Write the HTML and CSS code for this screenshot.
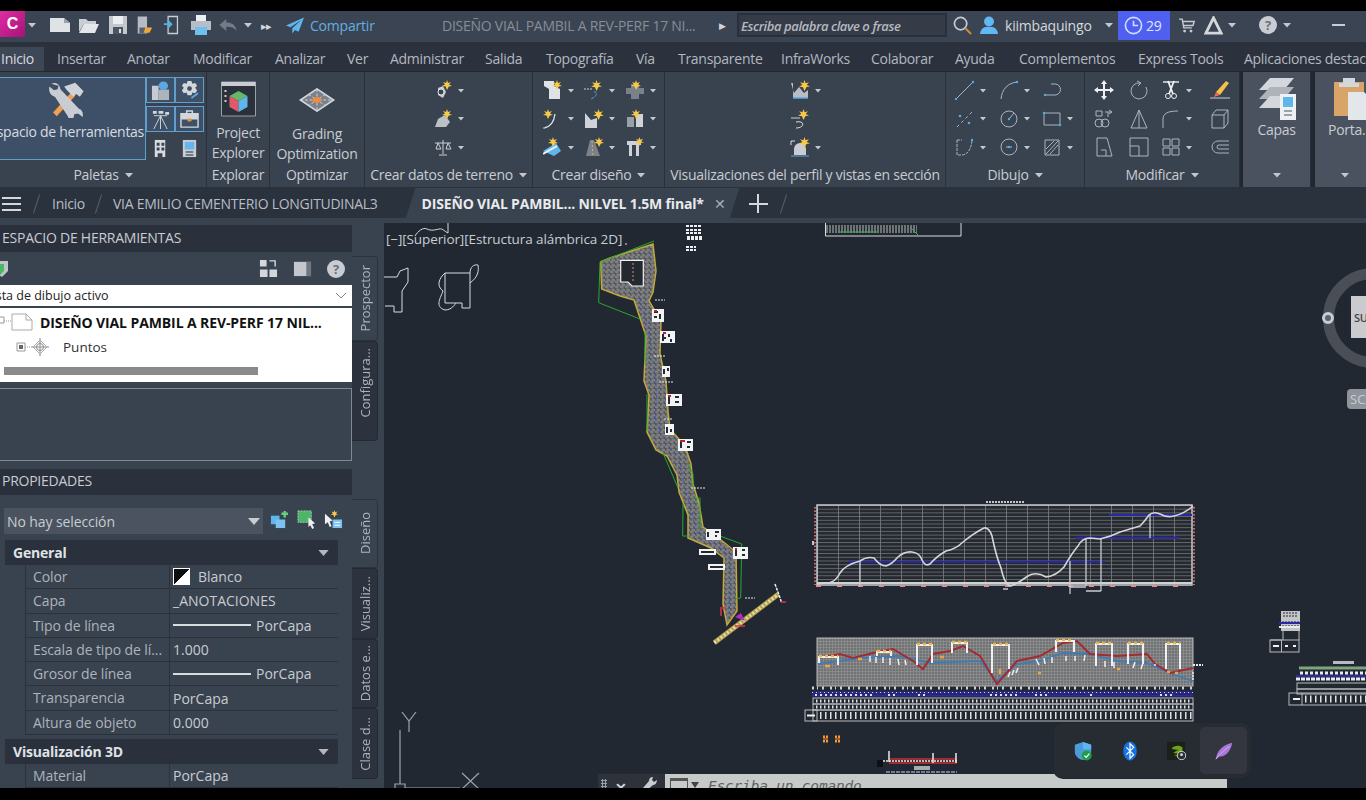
FILE: index.html
```html
<!DOCTYPE html>
<html lang="es">
<head>
<meta charset="utf-8">
<title>Civil 3D</title>
<link rel="stylesheet" href="styles.css">
</head>
<body>
<svg class="defs" aria-hidden="true">
  <symbol id="spark" viewBox="0 0 10 10"><path d="M5 0l1 3 3-1-2 2.600L10 6 6.800 6.400 5 10 3.600 6.500 0 6l3-1.500L1 2l3 1z" fill="#f7c948"/></symbol>
  <symbol id="caret" viewBox="0 0 8 6"><path d="M0 1h8L4 5.500z" fill="#c4c8ce"/></symbol>
</svg>
<div class="app">
  <header class="titlebar">
    <div class="logo">C</div>
    <svg class="caret tb-caret1"><use href="#caret"/></svg>
    <div class="qat">
      <svg class="q" viewBox="0 0 20 20"><path d="M0 3h14l6 5v9H0z" fill="#dfe3e8"/><path d="M14 3v5h6z" fill="#9aa1ab"/></svg>
      <svg class="q" viewBox="0 0 20 20"><path d="M0 4h7l2 2h8v3H5L0 17z" fill="#c9ced5"/><path d="M5 9h15l-4 9H0z" fill="#e3e6ea"/></svg>
      <svg class="q" viewBox="0 0 20 20"><path d="M1 1h18v18H1z" fill="#c3c8cf"/><path d="M5 1h10v8H5z" fill="#eceef1"/><path d="M5 12h10v7H5z" fill="#4d5562"/><path d="M11 14h2v4h-2z" fill="#dfe3e8"/></svg>
      <svg class="q q-sm" viewBox="0 0 20 20"><path d="M2 0h11v20H2z" fill="#b7bcc4"/><path d="M4 13h7v7H4z" fill="#59616e"/><path d="M11 13h8l-3 6H9z" fill="#f0a63a"/></svg>
      <svg class="q q-sm" viewBox="0 0 20 20"><path d="M6 0h11v20H6z" fill="none" stroke="#c9ced5" stroke-width="1.500"/><path d="M1 9h8M6 5l4 4-4 4" fill="none" stroke="#4fb3ea" stroke-width="2"/></svg>
      <svg class="q" viewBox="0 0 20 20"><path d="M5 0h10v6H5z" fill="#eceef1"/><path d="M0 6h20v9H0z" fill="#b9bec6"/><path d="M4 12h12v8H4z" fill="#6fc0ee"/></svg>
      <svg class="q q-undo" viewBox="0 0 20 14"><path d="M8 0v4c7 0 11 3 12 10-3-4-6-5-12-5v5L0 7z" fill="#737b87"/></svg>
      <svg class="caret"><use href="#caret"/></svg>
      <span class="ff">▸▸</span>
      <svg class="q q-send" viewBox="0 0 20 18"><path d="M20 0L0 9l5 2L17 3 7 12v6l3-4 4 2z" fill="#5fb6ee"/></svg>
      <span class="share">Compartir</span>
    </div>
    <div class="doc-title">DISEÑO VIAL PAMBIL A REV-PERF 17 NI...</div>
    <span class="tri">▶</span>
    <div class="search">Escriba palabra clave o frase</div>
    <svg class="mag" viewBox="0 0 20 20"><circle cx="8" cy="8" r="6.500" fill="none" stroke="#c6cbd2" stroke-width="1.800"/><path d="M13 13l6 6" stroke="#c98b3a" stroke-width="2.200"/></svg>
    <svg class="user" viewBox="0 0 20 20"><circle cx="10" cy="6" r="5.500" fill="#61b8f2"/><path d="M0 20c1-7 5-8 10-8s9 1 10 8z" fill="#61b8f2"/></svg>
    <span class="uname">kiimbaquingo</span>
    <svg class="caret tb-caret2"><use href="#caret"/></svg>
    <div class="trial"><svg class="clock" viewBox="0 0 20 20"><circle cx="10" cy="10" r="8.500" fill="none" stroke="#cfe0ff" stroke-width="1.700"/><path d="M10 5v5h5" fill="none" stroke="#cfe0ff" stroke-width="1.700"/></svg>29</div>
    <svg class="cart" viewBox="0 0 20 20"><path d="M0 2h4l2 11h10M4 5h15l-1.500 5H5" fill="none" stroke="#c6cbd2" stroke-width="1.800"/><circle cx="7" cy="17" r="1.800" fill="#c6cbd2"/><circle cx="15" cy="17" r="1.800" fill="#c6cbd2"/></svg>
    <svg class="apen" viewBox="0 0 20 20"><path d="M10 2L18 18H2z" fill="none" stroke="#d4d8dd" stroke-width="3"/></svg>
    <svg class="caret tb-caret3"><use href="#caret"/></svg>
    <div class="help">?</div>
    <svg class="caret tb-caret4"><use href="#caret"/></svg>
    <div class="minus"></div>
  </header>

  <nav class="tabs">
    <span class="tab active">Inicio</span><span class="tab">Insertar</span><span class="tab">Anotar</span><span class="tab">Modificar</span><span class="tab">Analizar</span><span class="tab">Ver</span><span class="tab">Administrar</span><span class="tab">Salida</span><span class="tab">Topografía</span><span class="tab">Vía</span><span class="tab">Transparente</span><span class="tab">InfraWorks</span><span class="tab">Colaborar</span><span class="tab">Ayuda</span><span class="tab">Complementos</span><span class="tab">Express Tools</span><span class="tab">Aplicaciones destacadas</span>
  </nav>

  <section class="ribbon">
    <div class="panel p-paletas">
      <div class="pbody paletas-body">
        <div class="bigbtn">
          <svg class="tools" viewBox="0 0 40 40">
            <path d="M6 34L26 12l4 4L10 38z" fill="#f0a050"/>
            <path d="M18 6l12-4 9 9-4 6-4-3-3 3-7-7z" fill="#cfd3d9"/>
            <path d="M4 3c5-2 9 0 10 6l20 21c3 1 5 4 4 9l-5-4-4 1-1 4 4 3c-5 1-9-1-10-5L8 17C3 16 1 11 2 6l5 4 4-1 1-4z" fill="#c9cdd3"/>
          </svg>
          <span class="bigbtn-label">Espacio de herramientas</span>
        </div>
        <div class="palgrid">
          <div class="palcell on"><svg viewBox="0 0 20 20"><path d="M1 5h7v15H1z" fill="#c6cbd2"/><path d="M8 9h11v11H8z" fill="#aeb4bc"/><ellipse cx="13" cy="5" rx="5" ry="4.500" fill="#5aa9e0"/></svg></div>
          <div class="palcell on"><svg viewBox="0 0 20 20"><path d="M8 0h4l1 3 3-1 2 3-2 2 2 3-2 3-3-1-1 3H8l-1-3-3 1-2-3 2-3-2-2 2-3 3 1z" fill="#d3d6db"/><circle cx="10" cy="8" r="2.500" fill="#3e5068"/><path d="M12 18l7-5" stroke="#5aa9e0" stroke-width="2"/></svg></div>
          <div class="palcell on"><svg viewBox="0 0 20 20"><path d="M2 1h4v3H2zM8 1h5v3H8zM15 2h4v3h-4z" fill="#d3d6db"/><path d="M3 6h14M10 6v14M10 6L3 20M10 6l7 14" stroke="#d3d6db" fill="none"/></svg></div>
          <div class="palcell on"><svg viewBox="0 0 20 20"><path d="M7 4V1h6v3M1 4h18v14H1z" fill="none" stroke="#d3d6db" stroke-width="1.500"/><path d="M1 4h18v6H1z" fill="#d3d6db"/><path d="M8 9h4v3H8z" fill="#e59a3f"/></svg></div>
          <div class="palcell"><svg viewBox="0 0 20 20"><path d="M4 1h11v18H4z" fill="#d8dbe0"/><path d="M6 4h3v3H6zM11 4h3v3h-3zM6 9h3v3H6zM11 9h3v3h-3zM7 15h5v4H7z" fill="#39424f"/></svg></div>
          <div class="palcell"><svg viewBox="0 0 20 20"><path d="M3 1h14v18H3z" fill="#c9cdd3"/><path d="M5 3h10v8H5z" fill="#66b6ec"/><path d="M6 13h8v1.500H6zM6 16h8v1.500H6z" fill="#59616e"/></svg></div>
        </div>
      </div>
      <div class="pfoot">Paletas <svg class="caret"><use href="#caret"/></svg></div>
    </div>

    <div class="panel p-explorer">
      <div class="pbody big">
        <svg class="bigicon" viewBox="0 0 36 36"><path d="M1 1h34v34H1z" fill="#2b313b" stroke="#9ba1a9"/><path d="M1 1h34v4H1z" fill="#c9cdd3"/><path d="M18 10l9 5-9 5-9-5z" fill="#63b86a"/><path d="M9 15l9 5v11l-9-5z" fill="#e0596a"/><path d="M27 15l-9 5v11l9-5z" fill="#5eb6ea"/><path d="M4 9h2v2H4zM4 14h2v2H4zM4 19h2v2H4z" fill="#c9cdd3"/></svg>
        <span class="biglabel">Project<br>Explorer</span>
      </div>
      <div class="pfoot">Explorar</div>
    </div>

    <div class="panel p-grading">
      <div class="pbody big">
        <svg class="bigicon wide" viewBox="0 0 38 26"><path d="M19 1l18 12-18 12L1 13z" fill="#7b818b" stroke="#d3d6db" stroke-width="1.800"/><path d="M10 7l18 12M28 7L10 19M19 1v24M1 13h36" stroke="#d3d6db" stroke-dasharray="3 2"/><path d="M19 9l6 4-6 4-6-4z" fill="#ee8b42"/></svg>
        <span class="biglabel">Grading<br>Optimization</span>
      </div>
      <div class="pfoot">Optimizar</div>
    </div>

    <div class="panel p-terreno">
      <div class="pbody col3">
        <div class="tool"><svg class="ic" viewBox="0 0 20 20"><path d="M5 8l5-2 3 6-3 6-5-3z" fill="#c9cdd3"/><circle cx="8" cy="12" r="3" fill="#39424f" stroke="#dfe3e8"/><use href="#spark" x="9" y="0" width="10" height="10"/></svg><svg class="caret"><use href="#caret"/></svg></div>
        <div class="tool"><svg class="ic" viewBox="0 0 20 20"><path d="M2 18l3-8 7-4 5 7-4 5z" fill="#bcc1c8"/><use href="#spark" x="9" y="0" width="10" height="10"/></svg><svg class="caret"><use href="#caret"/></svg></div>
        <div class="tool"><svg class="ic" viewBox="0 0 20 20"><path d="M10 3v14M6 18h8M2 6h16M5 6l-2 6h5zM15 6l-2 6h5z" fill="none" stroke="#c9cdd3"/></svg><svg class="caret"><use href="#caret"/></svg></div>
      </div>
      <div class="pfoot">Crear datos de terreno <svg class="caret"><use href="#caret"/></svg></div>
    </div>

    <div class="panel p-diseno">
      <div class="pbody tgrid g-diseno">
        <div class="tool"><svg class="ic" viewBox="0 0 20 20"><path d="M1 1h10v5l6 3v10H6V9L1 6z" fill="#dfe3e8"/><use href="#spark" x="9" y="0" width="10" height="10"/></svg><svg class="caret"><use href="#caret"/></svg></div>
        <div class="tool"><svg class="ic" viewBox="0 0 20 20"><path d="M0 9h8" stroke="#c9cdd3" stroke-dasharray="2 1"/><path d="M10 12c5 0 2 5-3 7" fill="none" stroke="#5aa9e0" stroke-dasharray="3 1"/><use href="#spark" x="7" y="0" width="11" height="11"/></svg><svg class="caret"><use href="#caret"/></svg></div>
        <div class="tool"><svg class="ic" viewBox="0 0 20 20"><path d="M6 4h8v4h5v6h-5v5H6v-5H1V8h5z" fill="#7b818b"/><use href="#spark" x="6" y="0" width="10" height="10"/></svg><svg class="caret"><use href="#caret"/></svg></div>
        <div class="tool"><svg class="ic" viewBox="0 0 20 20"><path d="M1 19c6-1 10-6 11-14" fill="none" stroke="#dfe3e8" stroke-width="1.300"/><circle cx="1" cy="19" r="1" fill="#5aa9e0"/><use href="#spark" x="0" y="0" width="10" height="10"/></svg><svg class="caret"><use href="#caret"/></svg></div>
        <div class="tool"><svg class="ic" viewBox="0 0 20 20"><path d="M1 4l6 7 6-2v10H1z" fill="#cfd3d9"/><use href="#spark" x="9" y="0" width="11" height="11"/></svg><svg class="caret"><use href="#caret"/></svg></div>
        <div class="tool"><svg class="ic" viewBox="0 0 20 20"><path d="M2 8h7v10H2z" fill="#9aa0a9"/><path d="M11 5h7v13h-7z" fill="#cfd3d9"/><use href="#spark" x="6" y="0" width="10" height="10"/></svg><svg class="caret"><use href="#caret"/></svg></div>
        <div class="tool"><svg class="ic" viewBox="0 0 20 20"><path d="M0 14L13 6l5 8-7 5z" fill="#5fb6ee"/><path d="M0 17l14-8" stroke="#eef0f2" stroke-width="2"/><use href="#spark" x="5" y="0" width="10" height="10"/></svg><svg class="caret"><use href="#caret"/></svg></div>
        <div class="tool"><svg class="ic" viewBox="0 0 20 20"><path d="M6 3h4l6 16H2z" fill="#7b818b"/><path d="M8 4l1 15" stroke="#eab14a" stroke-dasharray="2 2"/><use href="#spark" x="10" y="0" width="10" height="10"/></svg><svg class="caret"><use href="#caret"/></svg></div>
        <div class="tool"><svg class="ic" viewBox="0 0 20 20"><path d="M2 4h14v4h-2v11h-3V8H7v11H4V8H2z" fill="#cfd3d9"/><use href="#spark" x="10" y="0" width="9" height="9"/></svg><svg class="caret"><use href="#caret"/></svg></div>
      </div>
      <div class="pfoot">Crear diseño <svg class="caret"><use href="#caret"/></svg></div>
    </div>

    <div class="panel p-vis">
      <div class="pbody col3">
        <div class="tool"><svg class="ic" viewBox="0 0 20 20"><path d="M1 3h2v15h15v-8l-4 3-5-6-5 6z" fill="#b9bec6"/><path d="M3 18h15" stroke="#5aa9e0" stroke-width="1.500"/><use href="#spark" x="9" y="0" width="11" height="11"/></svg><svg class="caret"><use href="#caret"/></svg></div>
        <div class="tool"><svg class="ic" viewBox="0 0 20 20"><path d="M1 9h9" stroke="#c9cdd3"/><path d="M6 13c9-2 9 6 0 6" fill="none" stroke="#dfe3e8"/><use href="#spark" x="8" y="0" width="11" height="11"/></svg><span class="caret-gap"></span></div>
        <div class="tool"><svg class="ic" viewBox="0 0 20 20"><path d="M4 18v-6a6 6 0 0 1 12 0v6z" fill="#c9cdd3"/><path d="M1 4h4M1 4v4" stroke="#dfe3e8"/><path d="M1 19h18" stroke="#5aa9e0"/><use href="#spark" x="9" y="0" width="11" height="11"/></svg><svg class="caret"><use href="#caret"/></svg></div>
      </div>
      <div class="pfoot">Visualizaciones del perfil y vistas en sección</div>
    </div>

    <div class="panel p-dibujo">
      <div class="pbody tgrid g-dibujo">
        <div class="tool"><svg class="ic ln" viewBox="0 0 20 20"><path d="M1 19L18 2"/><circle cx="1" cy="19" r="1.200" class="dot"/><circle cx="18" cy="2" r="1.200" class="dot"/></svg><svg class="caret"><use href="#caret"/></svg></div>
        <div class="tool"><svg class="ic ln" viewBox="0 0 20 20"><path d="M2 19C3 9 9 3 18 2"/><circle cx="18" cy="2" r="1.200" class="dot"/></svg><svg class="caret"><use href="#caret"/></svg></div>
        <div class="tool"><svg class="ic ln" viewBox="0 0 20 20"><path d="M9 4h4a5 5 0 0 1 0 11H3"/><circle cx="3" cy="15" r="1.200" class="dot"/></svg><span class="caret-gap"></span></div>
        <div class="tool"><svg class="ic ln" viewBox="0 0 20 20"><path d="M2 18L18 2" stroke-dasharray="3 3"/><circle cx="5" cy="7" r="1.300" class="dot"/><circle cx="14" cy="14" r="1.300" class="dot"/></svg><svg class="caret"><use href="#caret"/></svg></div>
        <div class="tool"><svg class="ic ln" viewBox="0 0 20 20"><circle cx="10" cy="10" r="8"/><path d="M10 10l5-6"/><circle cx="10" cy="10" r="1.200" class="dot"/></svg><svg class="caret"><use href="#caret"/></svg></div>
        <div class="tool"><svg class="ic ln" viewBox="0 0 20 20"><path d="M2 4h16v12H2z"/><circle cx="2" cy="4" r="1.200" class="dot"/><circle cx="18" cy="16" r="1.200" class="dot"/></svg><svg class="caret"><use href="#caret"/></svg></div>
        <div class="tool"><svg class="ic ln" viewBox="0 0 20 20"><path d="M2 3h5M2 3v15h4c7 0 10-6 11-14" stroke-dasharray="3 1"/><circle cx="17" cy="3" r="1.200" class="dot"/></svg><svg class="caret"><use href="#caret"/></svg></div>
        <div class="tool"><svg class="ic ln" viewBox="0 0 20 20"><circle cx="10" cy="10" r="8"/><path d="M7 10h6"/><circle cx="10" cy="10" r="1.200" class="dot"/></svg><svg class="caret"><use href="#caret"/></svg></div>
        <div class="tool"><svg class="ic ln" viewBox="0 0 20 20"><path d="M3 3h14v15H3z"/><path d="M4 17L16 4M4 12l8-8M8 17l8-9" stroke="#8fa0b0"/></svg><svg class="caret"><use href="#caret"/></svg></div>
      </div>
      <div class="pfoot">Dibujo <svg class="caret"><use href="#caret"/></svg></div>
    </div>

    <div class="panel p-modif">
      <div class="pbody tgrid g-modif">
        <div class="tool"><svg class="ic" viewBox="0 0 20 20"><path d="M10 0l3 4h-2v5h5V7l4 3-4 3v-2h-5v5h2l-3 4-3-4h2v-5H4v2l-4-3 4-3v2h5V4H7z" fill="#eef0f2"/></svg></div>
        <div class="tool"><svg class="ic ln" viewBox="0 0 20 20"><path d="M11 3a8 8 0 1 0 6 4"/><path d="M8 1l4 2-3 3"/></svg></div>
        <div class="tool"><svg class="ic" viewBox="0 0 20 20"><path d="M2 2h16" stroke="#dfe3e8" stroke-width="1.500"/><path d="M7 1l5 13M13 1L8 14" stroke="#eef0f2" stroke-width="1.800"/><circle cx="7" cy="16" r="2.500" fill="none" stroke="#eef0f2"/><circle cx="13" cy="16" r="2.500" fill="none" stroke="#eef0f2"/></svg><svg class="caret"><use href="#caret"/></svg></div>
        <div class="tool"><svg class="ic" viewBox="0 0 20 20"><path d="M6 12L16 1l3 2-9 12z" fill="#f3c04c"/><path d="M6 12l4 3-6 2z" fill="#ea6a55"/><path d="M0 18h20" stroke="#c9cdd3"/></svg></div>
        <div class="tool"><svg class="ic ln" viewBox="0 0 20 20"><circle cx="5" cy="14" r="4"/><circle cx="11" cy="14" r="4"/><path d="M2 2h6v5H2zM11 3h7M15 1l3 2-3 2M14 3v5"/></svg></div>
        <div class="tool"><svg class="ic ln" viewBox="0 0 20 20"><path d="M10 1v18H2zM10 1l8 18h-8"/></svg></div>
        <div class="tool"><svg class="ic ln" viewBox="0 0 20 20"><path d="M2 19V10c0-5 4-8 15-8"/></svg><svg class="caret"><use href="#caret"/></svg></div>
        <div class="tool"><svg class="ic ln" viewBox="0 0 20 20"><path d="M2 6h12v13H2zM2 6l4-5h12l-4 5M14 19l4-5V1"/></svg></div>
        <div class="tool"><svg class="ic ln" viewBox="0 0 20 20"><path d="M3 1h10l5 18H3zM7 13h5v6"/></svg></div>
        <div class="tool"><svg class="ic ln" viewBox="0 0 20 20"><path d="M1 1h18v18H1zM10 9H1M10 9v10"/></svg></div>
        <div class="tool"><svg class="ic ln" viewBox="0 0 20 20"><path d="M2 2h7v7H2zM11 2h7v7h-7zM2 11h7v7H2zM11 11h7v7h-7z"/></svg><svg class="caret"><use href="#caret"/></svg></div>
        <div class="tool"><svg class="ic ln" viewBox="0 0 20 20"><path d="M19 4H8a6 6 0 0 0 0 12h11M19 8H9a2 2 0 0 0 0 4h10"/></svg></div>
      </div>
      <div class="pfoot">Modificar <svg class="caret"><use href="#caret"/></svg></div>
    </div>

    <div class="panel p-capas pale">
      <div class="pbody big">
        <svg class="bigicon capas-ic" viewBox="0 0 38 42"><path d="M12 0h24L26 12H1z" fill="#d3d6db"/><path d="M12 9h24L26 21H1z" fill="#aeb3ba"/><path d="M12 18h24L26 30H1z" fill="#d3d6db"/><path d="M22 16h16v26H22z" fill="#eef0f2"/><path d="M25 19h10v10H25z" fill="#5eb6ea"/><path d="M26 33h8M26 37h8" stroke="#4d5562"/></svg>
        <span class="biglabel capas-l">Capas</span>
      </div>
      <div class="pfoot"><svg class="caret"><use href="#caret"/></svg></div>
    </div>

    <div class="panel p-porta pale">
      <div class="pbody big">
        <svg class="bigicon porta-ic" viewBox="0 0 38 42"><path d="M0 4h30v34H0z" fill="#d8a468"/><path d="M9 0h12v5h4v4H5V5h4z" fill="#d3d6db"/><path d="M14 14h16l8 8v20H14z" fill="#e3e6ea"/></svg>
        <span class="biglabel porta-l">Porta...</span>
      </div>
      <div class="pfoot"><svg class="caret"><use href="#caret"/></svg></div>
    </div>
  </section>

  <nav class="docbar">
    <div class="burger"><i></i><i></i><i></i></div>
    <span class="slash"></span>
    <span class="dtab">Inicio</span>
    <span class="slash"></span>
    <span class="dtab">VIA EMILIO CEMENTERIO LONGITUDINAL3</span>
    <div class="dtab-active"><b>DISEÑO VIAL PAMBIL... NILVEL 1.5M final*</b><span class="dclose">✕</span></div>
    <span class="plus"></span>
    <span class="slash"></span>
  </nav>

  <main class="workspace">
    <aside class="side">
      <div class="side-main">
        <div class="phead">ESPACIO DE HERRAMIENTAS</div>
        <div class="ts-bar">
          <svg class="ts-shield" viewBox="0 0 12 16"><path d="M0 0h12v10l-6 6-6-4z" fill="#bfc4ca"/><path d="M0 3h8v7l-4 4-4-3z" fill="#4ab865"/></svg>
          <div class="ts-tools">
            <svg viewBox="0 0 20 20"><path d="M1 1h7v7H1zM11 11h8v8h-8zM1 11h8v8H1z" fill="#d3d6db"/><path d="M11 2h6v6" fill="none" stroke="#d3d6db" stroke-width="1.500"/></svg>
            <svg viewBox="0 0 20 20"><path d="M1 3h18v15H1z" fill="#c3c7cd"/><path d="M14 3h5v15h-5z" fill="#6f7680"/></svg>
            <div class="ts-help">?</div>
          </div>
        </div>
        <div class="ts-select"><span>Lista de dibujo activo</span><svg viewBox="0 0 10 6"><path d="M0 0l5 5 5-5" fill="none" stroke="#888"/></svg></div>
        <div class="tree">
          <div class="tree-inner">
            <div class="tree-row root">
              <svg class="tree-doc" viewBox="0 0 34 18"><path d="M0 4h5v6H0z" fill="#fff" stroke="#999"/><path d="M5 8h8" stroke="#999" stroke-dasharray="1 1"/><path d="M13 1h14l6 6v10H13z" fill="#fff" stroke="#aaa"/><path d="M27 1v6h6" fill="none" stroke="#aaa"/></svg>
              <b>DISEÑO VIAL PAMBIL A REV-PERF 17 NIL...</b>
            </div>
            <div class="tree-row sub">
              <svg class="tree-pt" viewBox="0 0 34 20"><path d="M1 6h8v8H1z" fill="#fff" stroke="#999"/><path d="M3 8h4v4H3z" fill="#666"/><path d="M9 10h5" stroke="#999" stroke-dasharray="1 1"/><path d="M24 1v18M15 10h18" stroke="#8a8a8a"/><circle cx="24" cy="10" r="3.500" fill="none" stroke="#8a8a8a"/><path d="M24 3l7 7-7 7-7-7z" fill="none" stroke="#aaa"/></svg>
              <span>Puntos</span>
            </div>
          </div>
          <div class="hscroll"></div>
        </div>
        <div class="ts-preview"></div>
        <div class="phead prop-head">PROPIEDADES</div>
        <div class="prop-top">
          <div class="combo">No hay selección<svg viewBox="0 0 12 7"><path d="M0 0h12L6 7z" fill="#c9cdd3"/></svg></div>
          <div class="prop-tools">
            <svg viewBox="0 0 20 20"><path d="M1 6h9v9H1z" fill="#5eb6ea"/><path d="M6 10h10v9H6z" fill="#7cc4ee"/><path d="M12 4h7M15.500 1v7" stroke="#63d27a" stroke-width="2.500"/></svg>
            <svg viewBox="0 0 20 20"><path d="M1 1h14v12H1z" fill="#4eb36b" stroke="#8fd6a4" stroke-dasharray="2 1"/><path d="M12 8l7 6-3 1 2 4-2 1-2-4-2 2z" fill="#eef0f2"/></svg>
            <svg viewBox="0 0 20 20"><path d="M1 4l8 7-3 1 2 5-2 1-2-5-3 2z" fill="#eef0f2"/><path d="M9 10h10v9H9z" fill="#7cc4ee"/><path d="M11 13h6M11 16h6" stroke="#fff"/><use href="#spark" x="7" y="0" width="8" height="8"/></svg>
          </div>
        </div>
        <div class="group">
          <div class="ghead">General<svg viewBox="0 0 12 7"><path d="M0 0h12L6 7z" fill="#b3b8bf"/></svg></div>
          <div class="prow"><span class="pname">Color</span><span class="pval"><i class="swatch"></i>Blanco</span></div>
          <div class="prow"><span class="pname">Capa</span><span class="pval">_ANOTACIONES</span></div>
          <div class="prow"><span class="pname">Tipo de línea</span><span class="pval"><i class="lineeg"></i>PorCapa</span></div>
          <div class="prow"><span class="pname">Escala de tipo de lí...</span><span class="pval">1.000</span></div>
          <div class="prow"><span class="pname">Grosor de línea</span><span class="pval"><i class="lineeg"></i>PorCapa</span></div>
          <div class="prow"><span class="pname">Transparencia</span><span class="pval">PorCapa</span></div>
          <div class="prow"><span class="pname">Altura de objeto</span><span class="pval">0.000</span></div>
        </div>
        <div class="group g2">
          <div class="ghead">Visualización 3D<svg viewBox="0 0 12 7"><path d="M0 0h12L6 7z" fill="#b3b8bf"/></svg></div>
          <div class="prow"><span class="pname">Material</span><span class="pval">PorCapa</span></div>
        </div>
      </div>
      <div class="vtabs">
        <div class="vt-top">
          <div class="vtab on h-pros"><span>Prospector</span></div>
          <div class="vtab h-conf"><span>Configura...</span></div>
        </div>
        <div class="vt-bot">
          <div class="vtab on h-dis"><span>Diseño</span></div>
          <div class="vtab h-vis"><span>Visualiz...</span></div>
          <div class="vtab h-dat"><span>Datos e...</span></div>
          <div class="vtab h-cla"><span>Clase d...</span></div>
        </div>
      </div>
    </aside>

    <div class="canvas">
      <svg class="drawing" viewBox="384 222 982 566" preserveAspectRatio="xMinYMin">
        <defs>
          <pattern id="gridChart" x="817" y="504" width="375" height="3.700" patternUnits="userSpaceOnUse"><path d="M0 .5H375" stroke="#73767b" stroke-width=".8"/></pattern>
          <pattern id="gridChartV" x="817" y="504" width="21" height="80" patternUnits="userSpaceOnUse"><path d="M.5 0V80" stroke="#7b7f85" stroke-width=".8"/></pattern>
          <pattern id="gridSec" x="817" y="637" width="3" height="3" patternUnits="userSpaceOnUse"><rect width="3" height="3" fill="#717274"/><path d="M0 .5H3M.5 0V3" stroke="#8f9092" stroke-width=".7"/></pattern>
          <pattern id="rough" width="5" height="5" patternUnits="userSpaceOnUse"><rect width="5" height="5" fill="#68696c"/><path d="M0 1h3M2 4h3" stroke="#96979a" stroke-width=".9"/><path d="M4 2h1M0 3h1" stroke="#38393d" stroke-width=".9"/></pattern>
        </defs>

        <text x="386" y="243" class="vp-label">[−][Superior][Estructura alámbrica 2D]</text>

        <g class="wire">
          <path d="M384 276h13l3-6 8-3v14l-6 9v21h-8v-6h-9"/>
          <path d="M445 272h25v35h-8v-5h-17zM445 272C439 277 436 285 443 290C441 296 434 306 445 309C452 309 455 303 456 302M470 272C470 266 474 263 478 264C479 270 478 276 470 282"/>
          <path d="M415 235c3-5 8-9 12-7s8 1 12 0 6 3 9 4v-10"/>
        </g>

        <g class="site">
          <path class="road" d="M600.700 260.700L610 257L653 243L656 270L653 291L649 300L661 320L660 353L666 380L668 410L670 428L685 445L691 463L693 483L699 502L703 526L716 535L736 551L737 610L727 624L723 603L724 557L711 547L688 537L688 514L679 491L677 474L667 455L656 449L647 431L649 394L644 380L646 335L639 314L634 299L620 295L601.700 288Z"/>
          <path class="green" d="M654 240L600 261L598.700 301.700L640 318M645 330V362.700M647 393V430M663 452L678 487M688 463L693 473V487M683 503L682.700 535H690M693 497H700V528M720 535L741.700 543L740.700 597L735 598"/>
          <path class="center" d="M640 298L648 325L653 360L657 390L655 420L665 440L680 460L684 485L692 510L695 530L715 542L730 556L731 590L728 610"/>
          <path class="inner" d="M620.700 259.300H643.300V285H632L628 281H620.700Z"/>
          <path class="inner2" d="M633 262V282" />
          <g class="labels">
            <rect x="652" y="308" width="12" height="13"/><rect x="660" y="330" width="15" height="12"/><rect x="662" y="365" width="8" height="11"/><rect x="666" y="393" width="16" height="12"/><rect x="665" y="423" width="9" height="11"/><rect x="678" y="438" width="15" height="12"/><rect x="706" y="528" width="15" height="11"/><rect x="733" y="546" width="15" height="12"/><rect x="699" y="548" width="17" height="6"/><rect x="708" y="563" width="17" height="6"/>
          </g>
          <g class="labelmarks">
            <path d="M654 311h4M654 316h3M660 313v5M663 333v7M669 333v3M663 337h3M671 338v3M664 368v5M668 367v3M669 396v7M675 396h4M675 401h4M667 426v6M671 428v3M681 441v6M687 441h4M687 446h3M708 531v5M715 531h4M715 535h2M736 549v6M742 549h3M742 554h3M701 551h13M710 566h13"/>
          </g>
          <path class="redlbl" d="M654 310h3M663 332h3M668 395h3M680 440h5M735 548h2"/>
          <path class="dim" d="M655 299h10M654 355h12M659 381h14M664 418h8M691 487h14M745 597h10M625 243h2"/>
          <path d="M714.300 641.700L778.300 593.300" class="diag"/>
          <path d="M714.300 641.700L778.300 593.300" class="diag2"/>
          <path d="M775 583L781.700 601.700" class="crossw"/>
          <path d="M721 608v7M781 601h5M735 625h10M720 607h6" class="redm"/>
          <path d="M735 616l10 4-4-8" class="magenta"/>
        </g>

        <g class="topstuff">
          <path d="M686 225h16M686 229h16M686 232h16M687 236h16M687 238h16M686 246h10M686 249h10" class="wblock"/>
          <path d="M825.500 222v13H961V222" class="wire-thin"/>
          <path d="M826 228H917" stroke="#6f7376" stroke-width="8" stroke-dasharray="2 1"/>
          <path d="M910 226l8 8M838 231h40" stroke="#3db05d" stroke-width="1"/>
        </g>

        <g class="chart">
          <rect x="817" y="504" width="375" height="80" fill="#24292f"/>
          <rect x="817" y="504" width="375" height="80" fill="url(#gridChart)"/>
          <rect x="817" y="504" width="375" height="80" fill="url(#gridChartV)"/>
          <rect x="817" y="504" width="375" height="80" class="cbox"/>
          <path d="M817 582H1192" stroke="#cfd1d3" stroke-width="2"/>
          <path d="M815 506V584M1194 506V584" stroke="#c76a6a" stroke-width="2" stroke-dasharray="1.500 2"/>
          <path d="M816 585H1194" stroke="#e08f8f" stroke-width="2" stroke-dasharray="5 16"/>
          <path d="M848 560.700H1105M1075 536.700H1180M1109 514H1192" stroke="#2a29a5" stroke-width="2"/>
          <path d="M860 560V585M1086 537V585M1150 513V537" class="cv"/>
          <path d="M1070 560V593M1070 586H1086M1086 590H1101M1101 537V590" class="cv"/>
          <path class="curve" d="M817 583L830 581.500Q836 580 840 572Q845 564 860 560Q867 555 874 557Q880 565 886 565Q892 563 897 557Q904 550 912 551Q920 552 922 559Q925 566 930 563Q937 555 946 550Q956 548 963 541Q974 532 984 527Q989 526 992 535Q996 555 1001 567Q1005 585 1011 585Q1020 581 1028 575Q1036 570 1046 576Q1056 575 1064 566Q1072 552 1078 545Q1082 537 1090 537L1100 538Q1110 536 1120 531L1140 525Q1145 520 1149 514Q1153 510 1160 513Q1167 517 1174 515Q1184 513 1193 505"/>
          <path d="M986 501H1024" stroke="#c4c6c8" stroke-width="2" stroke-dasharray="2 1"/>
          <path d="M1003 588h5" stroke="#c4c6c8" stroke-width="1.500"/>
          <path d="M813 540v4" stroke="#c4c6c8" stroke-width="2"/>
        </g>

        <g class="section">
          <rect x="817" y="637" width="376" height="48" fill="url(#gridSec)" stroke="#b5b6b8"/>
          <polyline class="sblue" points="818,663 860,657 900,655 930,662 980,660 997,680 1017,663 1040,660 1063,652 1090,653 1117,660 1147,662 1170,672 1193,680"/>
          <polyline class="sred" points="818,657 840,653 853,657 873,652 893,648 913,660 923,668 933,653 950,650 963,645 980,655 997,683 1017,660 1040,655 1063,642 1077,640 1090,653 1117,655 1147,653 1155,663 1170,672 1193,667"/>
          <path class="arch" d="M917 664V644H932V662M952 652V642H967V652M992 672V644H1009V668M1056 651V640H1074V651M1096 665V643H1112V665M1128 663V643H1143V663M1166 668V643H1180V668M819 662V656H838V664M877 655V651H891V655"/>
          <path d="M917 643H932M952 641H967M993 643H1009M1056 639H1074M1096 642H1112M1128 642H1143M1167 642H1180M819 655H838M877 650H891" stroke="#f0b53f" stroke-width="2.500" stroke-dasharray="3 3"/>
          <path class="ticks" d="M870 655v6M876 656v6M883 656v6M890 657v7M898 658l1 6M905 659l1 5M1010 671l-2 5M1014 669l-2 5M1018 667l-2 5M1036 658l3 6M1044 657l1 6M1052 656v6M1066 655v5M1075 655v5M1085 654l-1 6M1105 660v6M1114 661v6M1135 661l-2 6M1143 662l-2 6M1155 663v2"/>
          <path d="M825 665h5M858 658h4M940 656h4M1000 668v5M1038 672h3M1117 668h3M1167 671h3M1175 672h3" stroke="#e6a64a" stroke-width="2.500"/>
          <path d="M1193 664h10" stroke="#e8eaec" stroke-width="2" stroke-dasharray="2 1"/>
          <path d="M1193 671v9" stroke="#e8eaec" stroke-width="1.500" stroke-dasharray="2 1"/>
          <path d="M812 687H1193" stroke="#cfd1d3" stroke-width="3" stroke-dasharray="2 3 1 4 2 6"/>
          <path d="M812 691.500H1193M812 694.500H1193" stroke="#2a29a5" stroke-width="2"/>
          <path d="M812 691.500H1193" stroke="#d0d2ff" stroke-width="1" stroke-dasharray="1 3"/>
          <path d="M815 694h60M888 694h10M918 694h10M990 694h30M1035 694h15M1090 694h4M1160 694h12" stroke="#dfe1e3" stroke-width="2" stroke-dasharray="2 3"/>
          <rect x="813" y="697" width="380" height="6" class="tbox"/>
          <rect x="813" y="703" width="380" height="6" class="tbox"/>
          <rect x="813" y="709" width="380" height="11" class="tbox"/>
          <rect x="805" y="709" width="12" height="11" class="tbox"/>
          <path d="M807 714.500h8" stroke="#eef0f2" stroke-width="2"/>
          <path d="M816 700H1192" class="tdash"/>
          <path d="M816 706H1192" class="tdash"/>
          <path d="M820 714.500H1192" class="tdash big"/>
        </g>

        <g class="misc">
          <path d="M823 736h6M823 740h6M835 736h6M835 740h6" stroke="#e8a030" stroke-width="3" stroke-dasharray="2 1"/>
          <path d="M825 738h3M837 738h3" stroke="#d43c2c" stroke-width="2"/>
          <rect x="877" y="759" width="6" height="7" fill="#0d1014"/>
          <path d="M889 758H957M889 762H957" stroke="#a32a30" stroke-width="2"/>
          <path d="M883 760H957" stroke="#e8eaec" stroke-width="1.500" stroke-dasharray="2 1"/>
          <path d="M889 750v11M933 752v10M956 752v10" stroke="#e8eaec" stroke-width="1.500"/>
          <path d="M886 771H957" stroke="#6c7f96" stroke-width="2" stroke-dasharray="4 1"/>
          <rect x="914" y="765" width="16" height="4" fill="#a8abae"/>
        </g>

        <g class="blockA">
          <path d="M1281 610h19v20h-19z" fill="#dfe1e3" opacity=".85"/>
          <path d="M1283 612h15M1283 615h15M1282 621h17M1282 625h17" stroke="#24292f" stroke-width="1.200" stroke-dasharray="2 1"/>
          <path d="M1279 622h21" stroke="#2a29a5" stroke-width="2"/>
          <path d="M1279 626h21" stroke="#e8eaec" stroke-width="2"/>
          <rect x="1270" y="639" width="29" height="12" class="tbox"/>
          <path d="M1270.500 639h11v12M1283 630v9M1299 630v9" class="tline"/>
          <path d="M1273 645h6M1285 645h3M1293 645h3" stroke="#eef0f2" stroke-width="2"/>
        </g>
        <g class="blockB">
          <rect x="1333" y="660" width="21" height="3" fill="#b8babc"/>
          <path d="M1299 667H1366" stroke="#7ba57d" stroke-width="3"/>
          <path d="M1300 672H1366" stroke="#e8eaec" stroke-width="3" stroke-dasharray="3 2"/>
          <path d="M1296 675H1366" stroke="#2a29a5" stroke-width="2"/>
          <path d="M1296 678H1366" stroke="#e8eaec" stroke-width="3" stroke-dasharray="4 1"/>
          <rect x="1297" y="682" width="70" height="6" class="tbox"/>
          <rect x="1297" y="688" width="70" height="5" class="tbox"/>
          <rect x="1289" y="692" width="78" height="12" class="tbox"/>
          <path d="M1302 692v12" class="tline"/>
          <path d="M1293 698h7" stroke="#eef0f2" stroke-width="2"/>
          <path d="M1305 698H1366" class="tdash big"/>
        </g>

        <g class="ucs">
          <path d="M400 729V783M405 787H460M395 783h10v5h-10z"/>
          <path d="M402 711l7 9 7-9M409 720v11M462 772l17 16M479 772l-17 16"/>
        </g>
      </svg>

      <div class="viewcube">
        <div class="vc-ring"></div>
        <div class="vc-dot"></div>
        <div class="vc-face">SUP</div>
        <div class="vc-scp">SCP</div>
      </div>

      <div class="cmd">
        <div class="cmd-handle">
          <span class="dots"></span>
          <span class="cmd-x">✕</span>
          <svg class="wrench" viewBox="0 0 14 14"><path d="M10 0c-3 0-4 2-4 4l-6 7 3 3 7-6c2 0 4-2 4-5l-3 2-2-2z" fill="#c9cdd3"/></svg>
        </div>
        <div class="cmd-input">
          <svg class="cmd-ic" viewBox="0 0 18 14"><path d="M.500.500h17v13h-17z" fill="none" stroke="#555"/><path d="M0 0h18v3H0z" fill="#555"/></svg>
          <svg class="cmd-caret" viewBox="0 0 8 6"><path d="M0 0h8L4 6z" fill="#444"/></svg>
          <span class="cmd-text">Escriba un comando</span>
        </div>
      </div>

      <div class="tray">
        <div class="tcell"><svg viewBox="0 0 22 22"><path d="M11 1l9 3v8c0 5-5 8-9 9-4-1-9-4-9-9V4z" fill="#4d9bd9"/><path d="M11 1l9 3v5H11z" fill="#5fb6ee"/><circle cx="15" cy="16" r="5.500" fill="#1f9e4a"/><path d="M12.500 16l2 2 3.500-4" fill="none" stroke="#fff" stroke-width="1.300"/></svg></div>
        <div class="tcell"><svg viewBox="0 0 22 22"><ellipse cx="11" cy="11" rx="7.500" ry="10.500" fill="#1473e6"/><path d="M7 7l8 8-4 4V3l4 4-8 8" fill="none" stroke="#fff" stroke-width="1.300"/></svg></div>
        <div class="tcell"><svg viewBox="0 0 22 22"><path d="M0 1h20v20H0z" fill="#1c2118"/><path d="M5 8c5-4 9-3 12-1v8c-4 2-8 2-9 1 2 0 5-1 6-3-3 1-6 1-7 0 2-1 4-3 6-3-3-1-6 0-8-2z" fill="#6ba31d"/><circle cx="16" cy="16" r="4.500" fill="#2b2f36" stroke="#dfe3e8"/><circle cx="16" cy="15" r="1.500" fill="#dfe3e8"/></svg></div>
        <div class="tcell on"><svg viewBox="0 0 22 22"><path d="M2 20c1-9 8-16 18-18-1 8-7 16-14 15l-4 3z" fill="#a877d9"/><path d="M2 20c5-6 9-10 15-14" stroke="#d5b8ee" fill="none"/></svg></div>
      </div>
    </div>
  </main>
</div>
</body>
</html>
```

FILE: styles.css
```css
* { box-sizing: border-box; }
html, body { margin: 0; height: 100%; background: #000; overflow: hidden; }
body { font-family: "Open Sans", "Liberation Sans", sans-serif; font-size: 14px; color: #c8ccd2; }
.defs { display: none; }
svg { display: block; }
.app { width: 1366px; height: 800px; padding: 11px 0 12px; display: flex; flex-direction: column; overflow: hidden; }
.caret { width: 8px; height: 6px; flex: none; }
.caret-gap { width: 6px; flex: none; }

/* title bar */
.titlebar { height: 31px; background: #3b4452; display: flex; align-items: center; flex: none; padding-bottom: 3px; }
.logo { width: 25px; height: 26px; align-self: flex-start; background: linear-gradient(135deg, #e02ca0, #a5127c); color: #fff; font: 700 16px "Liberation Sans", sans-serif; display: flex; align-items: center; justify-content: center; }
.tb-caret1 { margin-left: 3px; }
.qat { display: flex; align-items: center; margin-left: 14px; }
.q { width: 20px; height: 20px; margin-right: 9px; }
.q-sm { width: 17px; margin-left: -1px; margin-right: 11px; }
.q-undo { width: 18px; height: 12px; margin-right: 7px; margin-left: -1px; }
.ff { font-size: 11px; letter-spacing: -1px; color: #d4d8dd; margin: 0 12px 0 9px; width: 12px; }
.q-send { width: 18px; height: 17px; margin-right: 6px; margin-left: 1px; }
.share { color: #63aee0; letter-spacing: -.2px; width: 68px; white-space: nowrap; }
.doc-title { margin-left: 64px; width: 264px; color: #868d98; letter-spacing: -.25px; white-space: nowrap; }
.tri { font-size: 9px; color: #cfd3d9; width: 18px; margin-left: 13px; }
.search { width: 210px; height: 24px; background: #353c48; border: 2px solid #2a303b; color: #b5bac2; font: italic 600 13px "Open Sans", sans-serif; padding: 2px 2px; letter-spacing: -.4px; white-space: nowrap; overflow: hidden; }
.mag { width: 19px; height: 19px; margin-left: 6px; }
.user { width: 20px; height: 18px; margin-left: 7px; }
.uname { margin-left: 6px; width: 97px; color: #d4d8dd; letter-spacing: -.2px; }
.tb-caret2 { margin-left: 3px; }
.trial { width: 52px; height: 29px; margin-left: 5px; align-self: flex-start; background: #4f5ff0; display: flex; align-items: center; padding-left: 6px; color: #dfe7ff; gap: 3px; letter-spacing: -.3px; }
.clock { width: 19px; height: 19px; }
.cart { width: 16px; height: 17px; margin-left: 9px; }
.apen { width: 19px; height: 19px; margin-left: 9px; }
.tb-caret3 { margin-left: 5px; }
.help { width: 18px; height: 18px; margin-left: 23px; border-radius: 50%; background: #c9cdd3; color: #6a707a; font-size: 13px; font-weight: 700; text-align: center; line-height: 18px; }
.tb-caret4 { margin-left: 6px; }
.minus { width: 13px; height: 2px; margin-left: 41px; background: #c9cdd3; flex: none; }

/* ribbon tabs */
.tabs { height: 29px; flex: none; background: #2b323e; display: grid; grid-template-columns: 44px 70px 66px 82px 72px 43px 95px 61px 90px 42px 103px 90px 84px 64px 119px 106px 200px; white-space: nowrap; align-items: stretch; overflow: hidden; }
.tab { padding: 7px 0 0 13px; letter-spacing: -.28px; color: #b3b8c0; line-height: 20px; }
.tab.active { background: #3e4755; margin-top: 5px; padding: 2px 0 0 1px; color: #d8dbe0; }

/* ribbon */
.ribbon { height: 116px; flex: none; display: flex; background: #22272f; border-top: 1px solid #23282f; overflow: hidden; }
.panel { background: #39424f; display: flex; flex-direction: column; border-right: 1px solid #2a303a; flex: none; }
.pbody { height: 92px; flex: none; }
.pfoot { height: 21px; display: flex; align-items: center; justify-content: center; gap: 6px; letter-spacing: -.28px; white-space: nowrap; color: #c8ccd2; line-height: 1; }
.p-paletas { width: 207px; }
.paletas-body { display: flex; padding-top: 5px; }
.bigbtn { width: 146px; height: 83px; background: #3e5068; border: 1px solid #5f9fce; border-left: 0; display: flex; flex-direction: column; align-items: flex-end; overflow: hidden; }
.tools { width: 38px; height: 37px; margin: 3px 60px 0 0; }
.bigbtn-label { margin-top: 4px; margin-right: 1px; white-space: nowrap; letter-spacing: -.28px; color: #d8dbe0; }
.palgrid { width: 58px; display: grid; grid-template-columns: 29px 29px; grid-template-rows: 29px 29px 26px; }
.palcell { display: flex; align-items: center; justify-content: center; height: 26px; }
.palcell svg { width: 19px; height: 19px; }
.palcell.on { border: 1px solid #5f9fce; background: #3e5068; }
.p-explorer { width: 63px; }
.p-grading { width: 95px; }
.big { display: flex; flex-direction: column; align-items: center; }
.bigicon { width: 37px; height: 36px; margin-top: 9px; }
.bigicon.wide { width: 38px; height: 26px; margin-top: 16px; margin-bottom: 6px; }
.biglabel { text-align: center; line-height: 20px; margin-top: 6px; letter-spacing: -.28px; white-space: nowrap; }
.p-terreno { width: 168px; }
.col3 { display: flex; flex-direction: column; align-items: center; padding-top: 4px; }
.tool { height: 28.500px; display: flex; align-items: center; gap: 5px; }
.tool .caret { width: 6px; height: 5px; }
.ic { width: 20px; height: 20px; flex: none; }
.ln path, .ln circle { fill: none; stroke: #a9b5c2; stroke-width: 1; }
.ln .dot { fill: #5aa9e0; stroke: none; }
.p-diseno { width: 132px; }
.tgrid { display: grid; padding-top: 4px; grid-auto-rows: 28.500px; }
.g-diseno { grid-template-columns: repeat(3, 41px); padding-left: 10px; }
.p-vis { width: 281px; }
.p-dibujo { width: 139px; }
.g-dibujo { grid-template-columns: repeat(3, 43.500px); padding-left: 9px; }
.p-modif { width: 155px; }
.g-modif { grid-template-columns: 35px 32px 49px 20px; padding-left: 9px; }
.p-capas { width: 68px; margin-left: 3px; }
.p-porta { width: 60px; margin-left: 4px; border-right: 0; }
.pale { background: #4a525f; }
.capas-ic { width: 38px; height: 42px; margin-top: 6px; }
.capas-l { margin-top: 0; }
.porta-ic { width: 38px; height: 42px; margin-top: 6px; margin-left: 16px; }
.porta-l { margin-top: 0; align-self: flex-start; margin-left: 13px; }

/* document tabs */
.docbar { height: 32px; flex: none; background: #2a323e; display: flex; align-items: center; border-bottom: 1px solid #39424f; padding-top: 2px; }
.burger { width: 19px; margin-left: 2px; display: flex; flex-direction: column; gap: 4px; }
.burger i { height: 2px; background: #d4d8dd; display: block; }
.slash { width: 1px; height: 20px; background: #565e6b; transform: rotate(18deg); margin: 0 15px; flex: none; }
.dtab { letter-spacing: -.28px; color: #b8bdc5; white-space: nowrap; }
.docbar .slash:nth-child(2) { margin: 0 15px; }
.docbar .slash:nth-child(4) { margin: 0 14px 0 13px; }
.dtab-active { margin-left: 28px; width: 334px; height: 31px; margin-top: -1px; background: #39424f; clip-path: polygon(10px 0, 100% 0, calc(100% - 10px) 100%, 0 100%); display: flex; align-items: center; padding: 1px 0 0 16px; white-space: nowrap; }
.dtab-active b { font-weight: 700; color: #e8eaec; letter-spacing: -.18px; }
.dclose { margin-left: 10px; color: #a9aeb6; font-size: 14px; }
.plus { width: 19px; height: 19px; margin-left: 9px; background: linear-gradient(#d4d8dd, #d4d8dd) center/100% 2px no-repeat, linear-gradient(#d4d8dd, #d4d8dd) center/2px 100% no-repeat; }

/* workspace */
.workspace { flex: 1; display: flex; background: #39424f; min-height: 0; }
.side { width: 384px; flex: none; display: flex; padding-top: 6px; overflow: hidden; }
.side-main { width: 352px; flex: none; display: flex; flex-direction: column; }
.phead { height: 27px; background: #2a313c; padding: 3px 0 0 2px; letter-spacing: -.25px; color: #c8ccd2; line-height: 20px; white-space: nowrap; flex: none; }
.ts-bar { height: 33px; display: flex; justify-content: space-between; align-items: center; padding-right: 7px; flex: none; }
.ts-shield { width: 12px; height: 16px; margin-left: -4px; }
.ts-tools { display: flex; align-items: center; gap: 15px; }
.ts-tools svg { width: 19px; height: 19px; }
.ts-help { width: 18px; height: 18px; border-radius: 50%; background: #c9cdd3; color: #6a707a; font-weight: 700; font-size: 13px; text-align: center; line-height: 18px; }
.ts-select { height: 21px; background: #fff; color: #222; display: flex; justify-content: space-between; align-items: center; padding-right: 6px; font-size: 12.500px; overflow: hidden; flex: none; }
.ts-select span { margin-left: -14px; white-space: nowrap; }
.ts-select svg { width: 10px; height: 6px; }
.tree { margin-top: 2px; height: 74px; background: #fff; color: #222; flex: none; overflow: hidden; position: relative; }
.tree-inner { width: 331px; height: 54px; overflow: hidden; }
.tree-row { display: flex; align-items: center; white-space: nowrap; }
.root { height: 28px; }
.tree-doc { width: 34px; height: 18px; flex: none; margin-left: -1px; }
.root b { margin-left: 7px; font-size: 14px; letter-spacing: -.1px; color: #111; }
.sub { height: 22px; padding-left: 16px; }
.tree-pt { width: 34px; height: 20px; flex: none; }
.sub span { margin-left: 13px; font-size: 13.500px; color: #333; }
.hscroll { position: absolute; left: 4px; top: 59px; width: 254px; height: 8px; background: #8a8a8a; }
.ts-preview { margin-top: 6px; height: 73px; border: 1px solid #828892; border-left: 0; flex: none; }
.prop-head { margin-top: 8px; height: 26px; padding-top: 2px; }
.prop-top { height: 45px; display: flex; align-items: flex-start; padding: 13px 0 0 4px; flex: none; }
.combo { width: 259px; height: 26px; background: #4a535f; display: flex; justify-content: space-between; align-items: center; padding: 0 3px 0 3px; color: #c8ccd2; letter-spacing: -.1px; }
.combo svg { width: 12px; height: 7px; }
.prop-tools { display: flex; gap: 8px; margin-left: 7px; margin-top: 2px; }
.prop-tools svg { width: 19px; height: 19px; }
.group { margin-left: 5px; width: 333px; flex: none; }
.g2 { margin-top: 4px; }
.ghead { height: 25px; background: #2a313c; display: flex; align-items: center; justify-content: space-between; padding: 0 9px 0 8px; font-weight: 700; letter-spacing: -.2px; color: #dfe2e6; }
.ghead svg { width: 11px; height: 6px; }
.prow { height: 24.300px; margin-left: 20px; display: flex; border-bottom: 1px solid #2c323c; border-left: 1px solid #2c323c; align-items: center; white-space: nowrap; }
.pname { width: 144px; padding-left: 7px; color: #adb3bb; flex: none; border-right: 1px solid #2c323c; height: 100%; line-height: 23px; letter-spacing: -.1px; }
.pval { padding-left: 3px; color: #c8ccd2; display: flex; align-items: center; }
.swatch { width: 17px; height: 17px; background: linear-gradient(45deg, #fff 50%, #0e0e0e 50%); transform: scaleX(-1); border: 1px solid #fff; margin-right: 8px; }
.lineeg { width: 78px; height: 1px; border-top: 2px solid #d8dbe0; margin-right: 5px; }
.vtabs { width: 26px; flex: none; display: flex; flex-direction: column; }
.vt-top { margin-top: 31px; }
.vt-bot { margin-top: 58px; }
.vtab { background: #2c333e; border-radius: 0 4px 4px 0; border: 1px solid #242a33; border-left: 0; display: flex; align-items: center; justify-content: center; }
.vtab.on { background: #39424f; border-color: #2c333e; }
.vtab span { writing-mode: vertical-rl; transform: rotate(180deg); color: #adb3bb; font-size: 13px; white-space: nowrap; }
.h-pros { height: 85px; }
.h-conf { height: 100px; align-items: flex-start; padding-top: 6px; }
.h-dis { height: 69px; }
.h-vis { height: 71px; }
.h-dat { height: 69px; }
.h-cla { height: 71px; }

/* canvas */
.canvas { flex: 1; min-width: 0; margin-top: 4px; background: #222831; position: relative; overflow: hidden; }
.drawing { width: 982px; height: 566px; }
.vp-label { font: 13.500px "Open Sans", sans-serif; fill: #c9cdd3; letter-spacing: -.1px; }
.wire path { fill: none; stroke: #d8dbe0; stroke-width: 1; }
.road { fill: url(#rough); stroke: #c2a93c; stroke-width: 1.500; }
.green { fill: none; stroke: #24ab2f; stroke-width: 1; }
.center { fill: none; stroke: #3a55d8; stroke-width: 1; stroke-dasharray: 3 4; }
.inner { fill: #24292f; stroke: #eef0f2; stroke-width: 1.200; }
.inner2 { stroke: #c98d8d; stroke-width: 1; stroke-dasharray: 2 2; fill: none; }
.labels rect { fill: #f2f3f4; }
.labelmarks path { stroke: #26292e; stroke-width: 2; fill: none; }
.redlbl { stroke: #b5262c; stroke-width: 2; fill: none; }
.dim { fill: none; stroke: #e6e8ea; stroke-width: 1.200; stroke-dasharray: 2 1; }
.diag { stroke: #b6a24c; stroke-width: 5; fill: none; }
.diag2 { stroke: #e3dcb0; stroke-width: 3; stroke-dasharray: 2 2; fill: none; }
.crossw { stroke: #eef0f2; stroke-width: 1.500; stroke-dasharray: 3 1; fill: none; }
.redm { stroke: #e0304a; stroke-width: 1.500; fill: none; }
.magenta { fill: #b02cc0; }
.wblock { stroke: #eef0f2; stroke-width: 2; stroke-dasharray: 3 1; fill: none; }
.wire-thin { fill: none; stroke: #d8dbe0; stroke-width: 1; }
.cbox { fill: none; stroke: #c9cbce; stroke-width: 1.500; }
.cv { fill: none; stroke: #c9cbce; stroke-width: 1.300; }
.curve { fill: none; stroke: #d4d6d9; stroke-width: 1.600; stroke-linejoin: round; }
.section, .chart, .site, .blockA, .blockB, .misc, .topstuff { filter: blur(.4px); }
.arch { fill: none; stroke: #eef0f2; stroke-width: 2; }
.sred { fill: none; stroke: #a32a30; stroke-width: 2; }
.sblue { fill: none; stroke: #3f7cb5; stroke-width: 1.800; }
.ticks { fill: none; stroke: #eef0f2; stroke-width: 1.500; }
.tbox { fill: none; stroke: #b9bbbe; stroke-width: 1; }
.tline { fill: none; stroke: #b9bbbe; stroke-width: 1; }
.tdash { stroke: #dfe1e3; stroke-width: 3; stroke-dasharray: 1.500 2.500; fill: none; }
.tdash.big { stroke-width: 7; stroke-dasharray: 1.500 3.500; }
.ucs path { fill: none; stroke: #9ea3aa; stroke-width: 1.200; }

.viewcube { position: absolute; left: 939px; top: 45px; width: 110px; height: 150px; }
.vc-ring { position: absolute; left: 0; top: 0; width: 100px; height: 100px; border-radius: 50%; border: 11px solid #4a4f57; }
.vc-dot { position: absolute; left: -1px; top: 44px; width: 12px; height: 12px; border-radius: 50%; background: #5d636b; border: 3px solid #c9cdd3; }
.vc-face { position: absolute; left: 28px; top: 28px; width: 40px; height: 42px; background: #c9cbce; color: #444; font-size: 11px; font-weight: 600; display: flex; align-items: center; padding-left: 3px; letter-spacing: -.2px; }
.vc-scp { position: absolute; left: 24px; top: 121px; width: 40px; height: 20px; background: #8f949b; border-radius: 4px; color: #c9cdd3; font-size: 13px; padding-left: 3px; line-height: 20px; }

.cmd { position: absolute; left: 214px; top: 551px; right: 139px; height: 15px; display: flex; overflow: hidden; }
.cmd-handle { width: 67px; background: #2d323b; display: flex; align-items: flex-start; flex: none; }
.dots { width: 6px; height: 14px; margin: 5px 0 0 3px; background: radial-gradient(circle, #9ba1a9 1px, transparent 1.200px) 0 0/3px 3px; }
.cmd-x { color: #d4d8dd; font-size: 14px; font-weight: 700; margin: 5px 0 0 8px; line-height: 18px; }
.wrench { width: 14px; height: 14px; margin: 3px 0 0 16px; }
.cmd-input { flex: 1; background: #c6cac9; display: flex; align-items: flex-start; padding-left: 5px; }
.cmd-ic { width: 18px; height: 14px; margin-top: 4px; flex: none; }
.cmd-caret { width: 8px; height: 6px; margin: 8px 0 0 3px; flex: none; }
.cmd-text { font: italic 14.500px "DejaVu Sans Mono", "Liberation Mono", monospace; color: #5f6266; margin: 4px 0 0 9px; white-space: nowrap; letter-spacing: -.2px; }

.tray { position: absolute; left: 670px; top: 500px; width: 197px; height: 55px; background: #272b32; border-radius: 9px; display: flex; align-items: center; padding-left: 5px; box-shadow: 0 0 0 1px #23272d; }
.tcell { width: 47px; height: 47px; display: flex; align-items: center; justify-content: center; border-radius: 5px; }
.tcell svg { width: 20px; height: 20px; }
.tcell.on { background: #33363e; }
```
